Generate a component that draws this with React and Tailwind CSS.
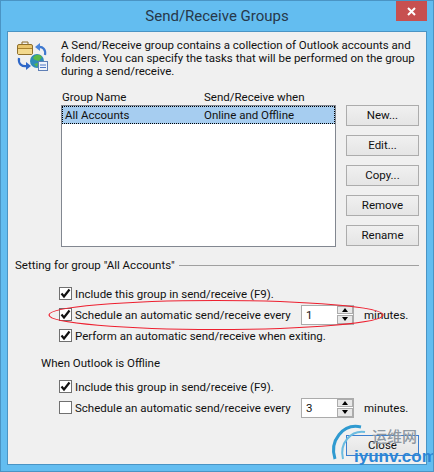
const uiFont = { fontFamily: 'Roboto, "Noto Sans CJK SC", sans-serif' };

function Check() {
  return (
    <svg width="11" height="11" viewBox="0 0 11 11">
      <path d="M1.5 5.5 L4 8.5 L9.5 1.5" fill="none" stroke="#111" strokeWidth="2.2" />
    </svg>
  );
}

function CheckRow({ checked, children }) {
  return (
    <div className="flex h-[21px] items-center">
      <div className="flex h-[13px] w-[13px] items-center justify-center border border-[#707070] bg-white">
        {checked && <Check />}
      </div>
      <div className="ml-[3px] flex items-center">{children}</div>
    </div>
  );
}

function Spinner({ value }) {
  return (
    <div className="mr-[10px] flex h-[20px] w-[53px] border border-[#ababab] bg-white">
      <span className="flex-1 pl-[4px] leading-[18px]">{value}</span>
      <div className="flex w-[16px] flex-col gap-px bg-white">
        <div className="flex flex-1 items-center justify-center border border-[#acacac] bg-[#e8e8e8]">
          <div className="h-0 w-0 border-x-[3.5px] border-b-[4px] border-x-transparent border-b-black" />
        </div>
        <div className="flex flex-1 items-center justify-center border border-[#acacac] bg-[#e8e8e8]">
          <div className="h-0 w-0 border-x-[3.5px] border-t-[4px] border-x-transparent border-t-black" />
        </div>
      </div>
    </div>
  );
}

function Btn({ label }) {
  return (
    <div className="flex h-[21px] w-[73px] items-center justify-center border border-[#acacac] bg-gradient-to-b from-[#f0f0f0] to-[#e5e5e5]">
      {label}
    </div>
  );
}

function GroupIcon() {
  return (
    <svg width="33" height="33" viewBox="0 0 33 33">
      {/* briefcase */}
      <path d="M6 3 V1 H12 V3" fill="none" stroke="#8a6a28" strokeWidth="1" />
      <rect x="1.5" y="3.5" width="15" height="10" rx="1.5" fill="#e9c66e" stroke="#8f6f2b" />
      <path d="M2 7.5 H16" stroke="#a8822f" />
      <rect x="2" y="8" width="14" height="5" fill="#f3d98d" />
      {/* top arrow */}
      <path d="M22 6 C27 5 30 9 29 14" fill="none" stroke="#3f78cf" strokeWidth="2.2" />
      <path d="M24 2 L19 6 L24 10 Z" fill="#4c86dc" />
      {/* bottom arrow */}
      <path d="M3 17 C2 23 6 26 11 25" fill="none" stroke="#2f68c8" strokeWidth="2.2" />
      <path d="M10 21 L15 25 L10 29 Z" fill="#2f68c8" />
      {/* globe */}
      <circle cx="21" cy="20" r="7" fill="#2e8bb8" />
      <path d="M17 17 C19 13 24 13 26 16 L23 20 L19 19 Z" fill="#58b848" />
      <path d="M18 23 L22 22 L21 26 Z" fill="#58b848" />
      {/* envelope */}
      <rect x="22.5" y="20.5" width="9" height="9" fill="#eef3fb" stroke="#5f7fb5" />
      <path d="M24 24 H30 M24 26.5 H30" stroke="#4f78c4" />
    </svg>
  );
}

export default function App() {
  return (
    <div style={uiFont} className="relative flex h-[472px] w-[434px] flex-col overflow-hidden border border-[#4a94c4] bg-[#63bdf0] text-[11.5px] text-[#111]">
      {/* title bar */}
      <div className="grid h-[30px] shrink-0 grid-cols-[1fr_auto_1fr]">
        <div />
        <div className="pt-[4px] text-[15px] leading-[22px] text-[#27384a]">Send/Receive Groups</div>
        <div className="flex justify-end pr-[6px]">
          <div className="flex h-[20px] w-[31px] items-center justify-center bg-[#c75050]">
            <svg width="9" height="9" viewBox="0 0 9 9">
              <path d="M1 1 L8 8 M8 1 L1 8" stroke="#fff" strokeWidth="2" />
            </svg>
          </div>
        </div>
      </div>

      {/* client area */}
      <div className="mx-[6px] h-[434px] border border-[#4a94c4] bg-[#f0f0f0] leading-[13px]">
        <div className="flex pl-[8px] pr-[8px] pt-[7px]">
          <div className="w-[45px] shrink-0 pt-[2px]">
            <GroupIcon />
          </div>
          <div className="whitespace-nowrap">
            A Send/Receive group contains a collection of Outlook accounts and
            <br />
            folders. You can specify the tasks that will be performed on the group
            <br />
            during a send/receive.
          </div>
        </div>

        <div className="mt-[11px] flex pl-[53px]">
          <div className="w-[275px]">
            <div className="flex h-[15px] items-end pl-px">
              <span className="w-[142px]">Group Name</span>
              <span>Send/Receive when</span>
            </div>
            <div className="mt-px h-[142px] border border-[#828790] bg-white">
              <div className="flex h-[18px] items-center border border-dotted border-black bg-[#a6cdf0] pl-[2px]">
                <span className="w-[139px]">All Accounts</span>
                <span>Online and Offline</span>
              </div>
            </div>
          </div>
          <div className="ml-[10px] mt-[16px] flex flex-col gap-[9px]">
            <Btn label="New..." />
            <Btn label="Edit..." />
            <Btn label="Copy..." />
            <Btn label="Remove" />
            <Btn label="Rename" />
          </div>
        </div>

        <div className="mt-[11px] flex items-center pl-[7px] pr-[7px]">
          <span className="whitespace-nowrap pt-px">Setting for group "All Accounts"</span>
          <div className="ml-[4px] h-px flex-1 bg-[#a0a0a0]" />
        </div>

        <div className="mt-[11px] pl-[51px]">
          <CheckRow checked><span className="pt-px">Include this group in send/receive (F9).</span></CheckRow>
          <CheckRow checked>
            <span className="w-[226px] whitespace-nowrap pt-px">Schedule an automatic send/receive every</span>
            <Spinner value="1" />
            <span className="pt-px">minutes.</span>
          </CheckRow>
          <CheckRow checked><span className="pt-px">Perform an automatic send/receive when exiting.</span></CheckRow>
        </div>

        <div className="mt-[11px] pl-[33px]">When Outlook is Offline</div>

        <div className="mt-[6px] pl-[51px]">
          <CheckRow checked><span className="pt-px">Include this group in send/receive (F9).</span></CheckRow>
          <CheckRow>
            <span className="w-[226px] whitespace-nowrap pt-px">Schedule an automatic send/receive every</span>
            <Spinner value="3" />
            <span className="pt-px">minutes.</span>
          </CheckRow>
        </div>

        <div className="mt-[17px] flex justify-end pr-[7px]">
          <div className="flex h-[21px] w-[73px] items-center justify-center border border-[#3c7fd0] bg-gradient-to-b from-[#f0f0f0] to-[#e5e5e5]">
            Close
          </div>
        </div>
      </div>

      {/* red annotation ellipse */}
      <svg className="absolute left-0 top-0" width="434" height="472" viewBox="0 0 434 472">
        <ellipse cx="215" cy="314" rx="167" ry="14.5" fill="none" stroke="#ee2030" strokeWidth="1.2" />
      </svg>

      {/* watermark */}
      <svg className="absolute left-0 top-0" width="434" height="472" viewBox="0 0 434 472">
        <path d="M360 426 C342 422 328 440 334 458" fill="none" stroke="#2f9ad0" strokeWidth="3" />
        <path d="M364 431 C350 429 338 442 342 458" fill="none" stroke="#6cbce0" strokeWidth="2" />
      </svg>
      <div className="absolute left-[371px] top-[427px] text-[15px] font-medium leading-[18px] text-[#8d97a1]">
        运维网
      </div>
      <div className="absolute left-[353px] top-[446px] text-[17px] font-bold leading-[20px] text-[#2b86d6]" style={{ fontFamily: '"Liberation Sans", sans-serif' }}>
        iyunv.com
      </div>
    </div>
  );
}
